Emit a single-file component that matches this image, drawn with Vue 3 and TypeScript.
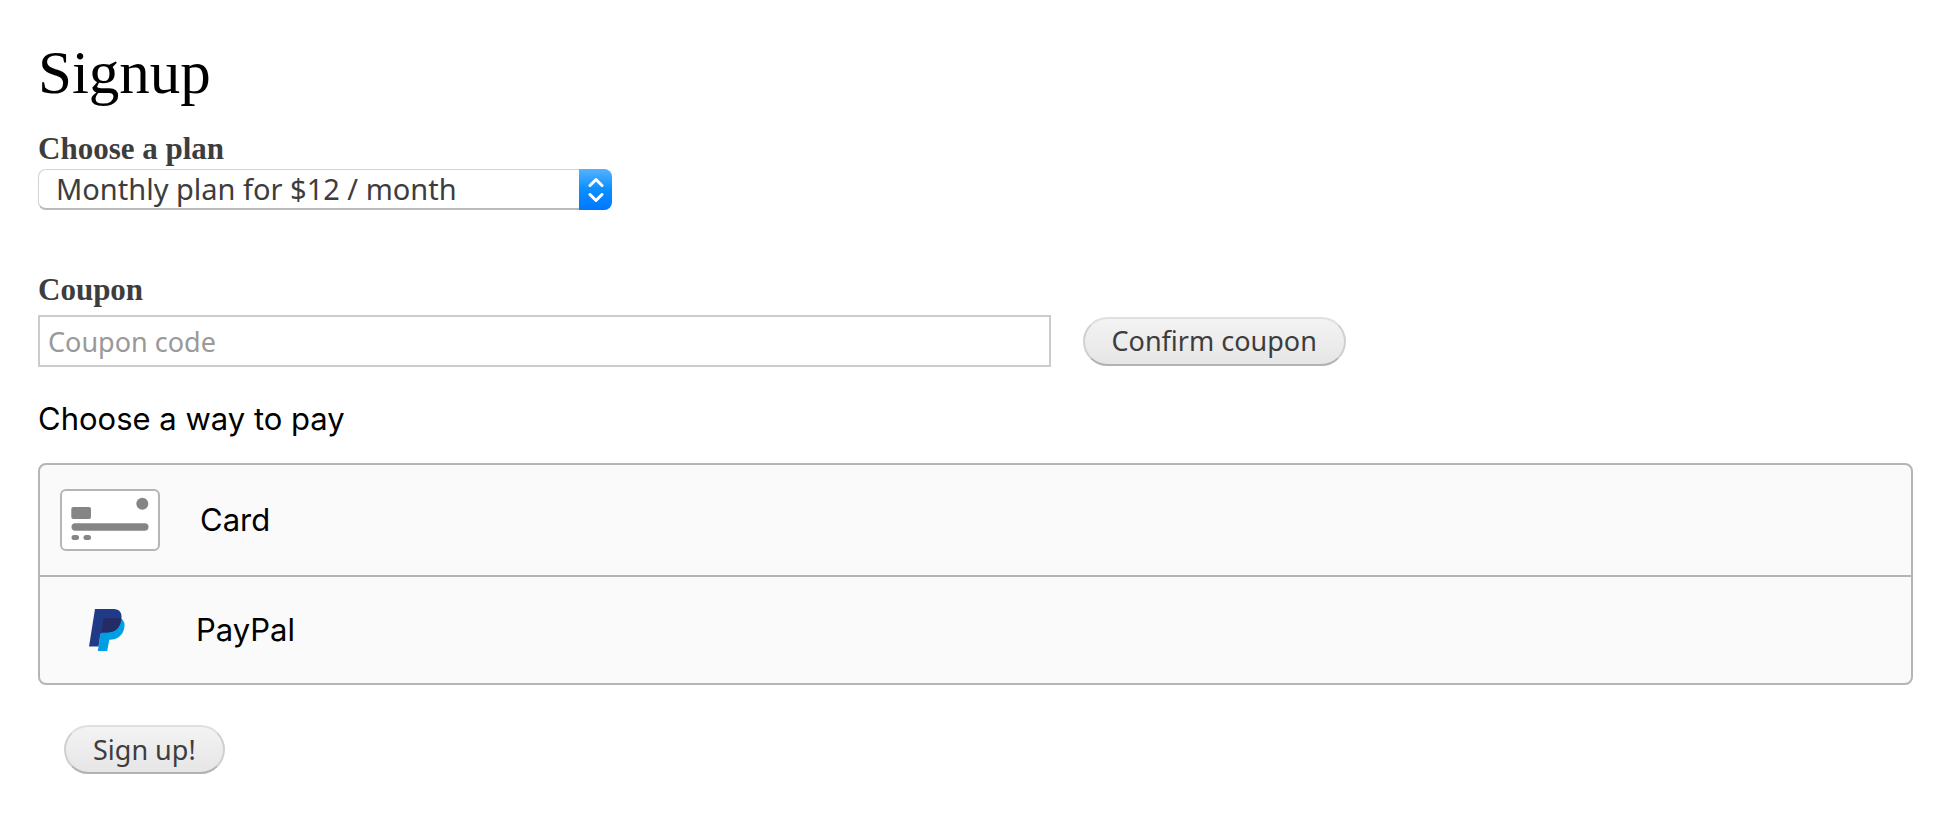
<script setup lang="ts">
import { ref } from 'vue'

interface Plan {
  id: string
  label: string
}

type PayMethod = 'card' | 'paypal'

const plans: Plan[] = [{ id: 'monthly', label: 'Monthly plan for $12 / month' }]
const methods: { id: PayMethod; label: string }[] = [
  { id: 'card', label: 'Card' },
  { id: 'paypal', label: 'PayPal' },
]

const plan = ref<string>('monthly')
const coupon = ref<string>('')
const method = ref<PayMethod | null>(null)
</script>

<template>
  <main class="page">
    <h1 class="title">Signup</h1>
    <form class="form" @submit.prevent>
      <label class="field-label" for="plan">Choose a plan</label>
      <div class="select-wrap">
        <select id="plan" v-model="plan" class="select">
          <option v-for="p in plans" :key="p.id" :value="p.id">{{ p.label }}</option>
        </select>
        <span class="stepper" aria-hidden="true">
          <svg width="16" height="26" viewBox="0 0 16 26">
            <path d="M2 8.5 8 2.500l6 6M2 17.500l6 6 6-6" />
          </svg>
        </span>
      </div>

      <label class="field-label coupon-label" for="coupon">Coupon</label>
      <div class="coupon-row">
        <input id="coupon" v-model="coupon" class="coupon-input" type="text" placeholder="Coupon code" />
        <button type="button" class="pill">Confirm coupon</button>
      </div>

      <h2 id="pay-heading" class="pay-heading">Choose a way to pay</h2>
      <div class="methods" role="group" aria-labelledby="pay-heading">
        <button
          v-for="m in methods"
          :key="m.id"
          type="button"
          class="method"
          :class="m.id"
          :aria-pressed="method === m.id"
          @click="method = m.id"
        >
          <svg v-if="m.id === 'card'" class="card-icon" width="100" height="62" viewBox="0 0 100 62" aria-hidden="true">
            <rect x="1" y="1" width="98" height="60" rx="5" fill="#fff" stroke="#b5b5b5" stroke-width="2" />
            <g fill="#858585">
              <circle cx="82.3" cy="14.8" r="6" />
              <rect x="11.3" y="18" width="19.700" height="12" rx="2" />
              <rect x="11.5" y="34.3" width="77" height="7.4" rx="3.7" />
              <rect x="11.5" y="46" width="7.5" height="5" rx="2.5" />
              <rect x="23.5" y="46" width="7.5" height="5" rx="2.5" />
            </g>
          </svg>
          <svg v-else class="paypal-icon" width="36" height="42" viewBox="0 0 36 42" aria-hidden="true">
            <path
              fill="#009ee3"
              d="M14 9h17.2c3.3 1.8 4.9 4.7 4.2 9-1.4 8.700-6.900 12.700-15.100 12.700L18.200 42H8.800z"
            />
            <path
              fill="#213a87"
              d="M6 0h18.5c6.2 0 8.8 4 7.9 10.2C31 19.500 26 23.500 17.200 23.500h-3c-1.600 0-2.600.8-2.900 2.400L9.500 37.500H0z"
            />
            <path
              fill="#232c65"
              d="M16 9h11.500c1.900 0 3.500.3 4.900 1.100C31 19.500 26 23.500 17.200 23.500h-3.200c-.6 0-1.100.1-1.500.4l1.700-13C14.400 9.700 15 9 16 9z"
            />
          </svg>
          <span>{{ m.label }}</span>
        </button>
      </div>

      <button type="submit" class="pill submit">Sign up!</button>
    </form>
  </main>
</template>

<style>
body {
  margin: 0;
  background: #fff;
}
</style>

<style scoped>
.page {
  padding: 40px 41px 56px 38px;
  color: #000;
}
.title {
  margin: 0;
  font: 400 61px/66px "Liberation Serif", serif;
}
.form {
  display: flex;
  flex-direction: column;
  align-items: flex-start;
}
.field-label {
  margin: 26px 0 3px;
  font: 700 31px/34px "Liberation Serif", serif;
  color: #3d3d3d;
}
.select-wrap {
  position: relative;
  width: 574px;
  max-width: 100%;
}
.select {
  display: block;
  appearance: none;
  box-sizing: border-box;
  width: 100%;
  height: 41px;
  margin: 0;
  padding: 0 48px 0 17px;
  border: 1px solid #d3d3d3;
  border-width: 1px 1px 2px;
  border-bottom-color: #bababa;
  border-radius: 8px;
  background: #fff;
  color: #3d3d3d;
  font: 400 29px/38px "Noto Sans", sans-serif;
}
.stepper {
  position: absolute;
  top: 0;
  right: 0;
  bottom: 0;
  display: flex;
  align-items: center;
  justify-content: center;
  width: 33px;
  border-radius: 0 8px 8px 0;
  background: linear-gradient(#55b2ff, #0a8fff 50%, #0077ff);
  pointer-events: none;
}
.stepper path {
  fill: none;
  stroke: #fff;
  stroke-width: 3;
  stroke-linecap: round;
  stroke-linejoin: round;
}
.coupon-label {
  margin-top: 63px;
}
.coupon-row {
  display: flex;
  align-items: center;
  gap: 32px;
  width: 100%;
  margin-top: 5px;
}
.coupon-input {
  box-sizing: border-box;
  width: 54%;
  height: 52px;
  margin: 0;
  padding: 0 8px;
  border: 2px solid #ccc;
  border-radius: 0;
  background: #fff;
  color: #3d3d3d;
  font: 400 27px/36px "Noto Sans", sans-serif;
}
.coupon-input::placeholder {
  color: #999;
  opacity: 1;
}
.pill {
  box-sizing: border-box;
  height: 49px;
  padding: 0 27px;
  border: 2px solid #d0d0d0;
  border-top-color: #e0e0e0;
  border-bottom-color: #b2b2b2;
  border-radius: 25px;
  background: linear-gradient(#f3f3f3, #e6e6e6);
  color: #3d3d3d;
  font: 400 27px/36px "Noto Sans", sans-serif;
  white-space: nowrap;
}
.pay-heading {
  margin: 32px 0 0;
  font: 400 31px/40px Inter, sans-serif;
}
.methods {
  box-sizing: border-box;
  width: 100%;
  margin-top: 24px;
  border: 2px solid #b5b5b5;
  border-radius: 8px;
  background: #fafafa;
  overflow: hidden;
}
.method {
  display: flex;
  align-items: center;
  box-sizing: border-box;
  width: 100%;
  height: 110px;
  margin: 0;
  padding: 0 20px;
  border: 0;
  background: none;
  color: #000;
  font: 400 31px/40px Inter, sans-serif;
  text-align: left;
}
.method.card {
  gap: 40px;
}
.method.paypal {
  gap: 71px;
  padding-left: 49px;
}
.method + .method {
  height: 108px;
  border-top: 2px solid #b5b5b5;
}
.submit {
  margin: 40px 0 0 26px;
}
</style>
